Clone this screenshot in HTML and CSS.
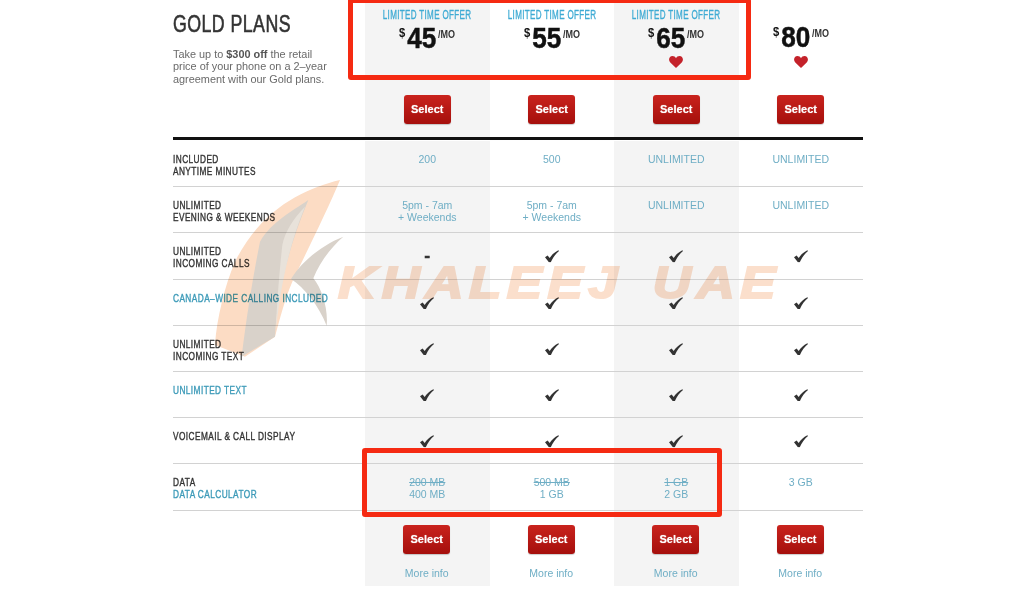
FILE: index.html
```html
<!DOCTYPE html>
<html lang="en">
<head>
<meta charset="utf-8">
<title>Gold Plans</title>
<link rel="stylesheet" href="styles.css">
</head>
<body>
<svg class="defs" aria-hidden="true">
  <symbol id="tick" viewBox="0 0 15 13"><path d="M0 7.600 2.800 5.800 5 8.400C7 5 10.300 2 14.300 0L15 1C11.300 4 8.300 8.200 6.200 13H4.200Z"/></symbol>
  <symbol id="love" viewBox="0 0 14 12"><path d="M7 12 1.300 6.500C-1.200 3.800.4 0 3.500 0 5 0 6.300.8 7 2.200 7.700.8 9 0 10.500 0 13.600 0 15.200 3.800 12.700 6.500Z"/></symbol>
</svg>
<main class="plans">
  <section class="row head">
    <div class="intro">
      <h1>GOLD PLANS</h1>
      <p>Take up to <b>$300 off</b> the retail<br>price of your phone on a 2–year<br>agreement with our Gold plans.</p>
    </div>
    <div class="cell shade plan"><div class="offer">LIMITED TIME OFFER</div><div class="price"><sup>$</sup><span>45</span><sup class="mo">/MO</sup></div><div class="heart-slot"></div><a class="btn">Select</a></div>
    <div class="cell plan"><div class="offer">LIMITED TIME OFFER</div><div class="price"><sup>$</sup><span>55</span><sup class="mo">/MO</sup></div><div class="heart-slot"></div><a class="btn">Select</a></div>
    <div class="cell shade plan"><div class="offer">LIMITED TIME OFFER</div><div class="price"><sup>$</sup><span>65</span><sup class="mo">/MO</sup></div><div class="heart-slot"><svg class="heart"><use href="#love"/></svg></div><a class="btn">Select</a></div>
    <div class="cell plan"><div class="offer"></div><div class="price up"><sup>$</sup><span>80</span><sup class="mo">/MO</sup></div><div class="heart-slot"><svg class="heart"><use href="#love"/></svg></div><a class="btn">Select</a></div>
  </section>
  <div class="rule"><div class="rule-line"></div></div>

  <section class="row line"><div class="label">INCLUDED<br>ANYTIME MINUTES</div><div class="cell shade val">200</div><div class="cell val">500</div><div class="cell shade val">UNLIMITED</div><div class="cell val">UNLIMITED</div></section>
  <section class="row line"><div class="label">UNLIMITED<br>EVENING &amp; WEEKENDS</div><div class="cell shade val">5pm - 7am<br>+ Weekends</div><div class="cell val">5pm - 7am<br>+ Weekends</div><div class="cell shade val">UNLIMITED</div><div class="cell val">UNLIMITED</div></section>
  <section class="row line"><div class="label">UNLIMITED<br>INCOMING CALLS</div><div class="cell shade chk"><span class="dash">-</span></div><div class="cell chk"><svg class="tick"><use href="#tick"/></svg></div><div class="cell shade chk"><svg class="tick"><use href="#tick"/></svg></div><div class="cell chk"><svg class="tick"><use href="#tick"/></svg></div></section>
  <section class="row line"><div class="label link">CANADA–WIDE CALLING INCLUDED</div><div class="cell shade chk"><svg class="tick"><use href="#tick"/></svg></div><div class="cell chk"><svg class="tick"><use href="#tick"/></svg></div><div class="cell shade chk"><svg class="tick"><use href="#tick"/></svg></div><div class="cell chk"><svg class="tick"><use href="#tick"/></svg></div></section>
  <section class="row line"><div class="label">UNLIMITED<br>INCOMING TEXT</div><div class="cell shade chk"><svg class="tick"><use href="#tick"/></svg></div><div class="cell chk"><svg class="tick"><use href="#tick"/></svg></div><div class="cell shade chk"><svg class="tick"><use href="#tick"/></svg></div><div class="cell chk"><svg class="tick"><use href="#tick"/></svg></div></section>
  <section class="row line"><div class="label link">UNLIMITED TEXT</div><div class="cell shade chk"><svg class="tick"><use href="#tick"/></svg></div><div class="cell chk"><svg class="tick"><use href="#tick"/></svg></div><div class="cell shade chk"><svg class="tick"><use href="#tick"/></svg></div><div class="cell chk"><svg class="tick"><use href="#tick"/></svg></div></section>
  <section class="row line"><div class="label">VOICEMAIL &amp; CALL DISPLAY</div><div class="cell shade chk"><svg class="tick"><use href="#tick"/></svg></div><div class="cell chk"><svg class="tick"><use href="#tick"/></svg></div><div class="cell shade chk"><svg class="tick"><use href="#tick"/></svg></div><div class="cell chk"><svg class="tick"><use href="#tick"/></svg></div></section>
  <section class="row line tall"><div class="label">DATA<br><span class="link">DATA CALCULATOR</span></div><div class="cell shade val"><s>200 MB</s><br>400 MB</div><div class="cell val"><s>500 MB</s><br>1 GB</div><div class="cell shade val"><s>1 GB</s><br>2 GB</div><div class="cell val">3 GB</div></section>
  <section class="row foot"><div></div>
    <div class="cell shade act"><a class="btn">Select</a><a class="more">More info</a></div>
    <div class="cell act"><a class="btn">Select</a><a class="more">More info</a></div>
    <div class="cell shade act"><a class="btn">Select</a><a class="more">More info</a></div>
    <div class="cell act"><a class="btn">Select</a><a class="more">More info</a></div>
  </section>
</main>

<div class="callout top"></div>
<div class="callout bottom"></div>

<svg class="logo" viewBox="0 0 450 570" aria-hidden="true">
  <path class="o" d="M405 15C300 40 170 100 90 260 60 330 35 430 30 510L120 545 210 485C225 430 240 370 262 320 300 240 370 100 405 15Z"/>
  <path class="g" d="M310 75C260 110 200 140 165 200 145 300 125 420 110 545L210 485C215 380 240 240 310 75Z"/>
  <path class="s" d="M300 95C265 130 240 170 232 210 222 300 215 400 212 470 222 380 240 240 300 95Z"/>
  <path class="g" d="M415 185C350 210 290 260 258 312 300 340 340 390 365 452 370 400 350 340 325 310 345 260 380 215 415 185Z"/>
</svg>
<span class="wordmark">KHALEEJ UAE</span>
</body>
</html>
```
FILE: styles.css
```css
* { box-sizing: border-box; }
html, body { margin: 0; height: 590px; overflow: hidden; background: #fff; }
body { position: relative; font-family: "Liberation Sans", Arial, sans-serif; color: #333; }
.defs { position: absolute; width: 0; height: 0; }

.plans { width: 690px; margin-left: 173px; filter: blur(.3px); }
.row { display: grid; grid-template-columns: 192px repeat(4, 124.5px); }

.shade { background: #f4f4f4; }
.cell { text-align: center; }

.head { height: 137px; }
.intro { padding-top: 11px; }
h1 { margin: 0; width: 160px; font-size: 24px; font-weight: 400; line-height: 26px; letter-spacing: .6px; white-space: nowrap; color: #333; -webkit-text-stroke: .6px #333; transform: scaleX(.74); transform-origin: left center; }
.intro p { margin: 11px 0 0; font-size: 10.9px; line-height: 12.3px; color: #6a6a6a; white-space: nowrap; }
.intro b { color: #555; }

.plan { display: flex; flex-direction: column; align-items: center; padding-top: 8px; }
.offer { height: 14px; font-size: 12px; line-height: 14px; letter-spacing: .5px; color: #3fabd4; white-space: nowrap; -webkit-text-stroke: .35px #3fabd4; transform: scaleX(.67); }
.price { height: 34px; margin-top: -1px; margin-bottom: -1px; font-weight: 700; color: #111; white-space: nowrap; display: flex; align-items: flex-start; transform: scaleX(.9); }
.price.up { margin-top: -2px; margin-bottom: 0; }
.price span { font-size: 29px; line-height: 34px; -webkit-text-stroke: .5px #111; }
.price sup { font-size: 12.5px; line-height: 14px; margin: 5px 2px 0 0; }
.price .mo { font-size: 10px; margin: 7px 0 0 2px; color: #333; }
.heart-slot { height: 41px; padding-top: 2px; }
.heart { display: block; width: 14px; height: 12px; fill: #c4222a; }

.btn { display: block; width: 47px; height: 29px; border-radius: 3px; background: linear-gradient(#c9231d, #a50f0c); color: #fff; font-size: 11px; font-weight: 700; line-height: 29px; text-align: center; box-shadow: 0 1px 1px #0003; text-shadow: 0 0 1px #ffffffa0; }

.rule { height: 4px; }
.rule-line { height: 3px; background: #111; }

.line { height: 46.2px; border-bottom: 1px solid #d2d2d2; }
.line.tall { height: 47px; }
.label { padding-top: 12px; font-size: 11.5px; line-height: 12px; letter-spacing: .6px; white-space: nowrap; color: #333; -webkit-text-stroke: .4px currentColor; transform: scaleX(.72); transform-origin: left center; }
.link { color: #3c9ab8; }
.val { padding-top: 12px; font-size: 10.5px; line-height: 12px; color: #6faec5; }
.val s { text-decoration-thickness: 1px; }
.chk { padding-top: 17px; }
.tick { display: block; width: 14px; height: 12.500px; margin: 0 auto; fill: #333; }
.dash { display: block; font-family: "DejaVu Sans", sans-serif; font-size: 14px; font-weight: 700; line-height: 13px; color: #333; -webkit-text-stroke: .6px #333; }

.foot { height: 75px; }
.act { display: flex; flex-direction: column; align-items: center; padding-top: 14px; padding-right: 1px; }
.more { margin-top: 12px; font-size: 10.5px; line-height: 14px; color: #6faec5; }

.callout { position: absolute; border: 5px solid #f52a12; border-radius: 3px; }
.callout.top { left: 348px; top: -2px; width: 403px; height: 82px; }
.callout.bottom { left: 362px; top: 448px; width: 360px; height: 69px; }

.logo { position: absolute; left: 205px; top: 175px; width: 150px; height: 190px; mix-blend-mode: multiply; filter: blur(.6px); }
.logo .o { fill: #fcdcc4; }
.logo .g { fill: #d9d2ca; }
.logo .s { fill: #e8e2da; }
.wordmark { position: absolute; left: 338px; top: 264px; font-size: 44px; font-style: italic; font-weight: 700; line-height: 38px; letter-spacing: 4.6px; word-spacing: 8px; white-space: nowrap; color: #fbdfcc; -webkit-text-stroke: 2px #fbdfcc; mix-blend-mode: multiply; filter: blur(.6px); transform: scaleX(1.2); transform-origin: left center; }
```
